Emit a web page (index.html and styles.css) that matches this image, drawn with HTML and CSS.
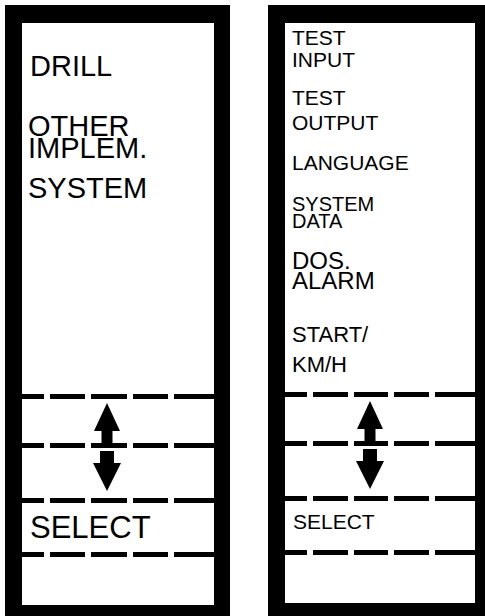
FILE: index.html
```html
<!DOCTYPE html>
<html>
<head>
  <title>Terminal Menus</title>
  <link rel="stylesheet" href="styles.css">
</head>
<body>

  <!-- Main menu -->
  <div class="screen screen-main">
    <div class="menu">
      <div class="menu-item">DRILL</div>
      <div class="menu-item">OTHER<br>IMPLEM.</div>
      <div class="menu-item">SYSTEM</div>
    </div>
    <div class="dash"><span></span><span></span><span></span><span></span><span></span></div>
    <div class="key key-up">
      <svg width="28" height="40" viewBox="0 0 28 40"><polygon points="14,0 27,28 19.5,28 19.5,40 8.5,40 8.5,28 1,28" fill="#000"/></svg>
    </div>
    <div class="dash"><span></span><span></span><span></span><span></span><span></span></div>
    <div class="key key-down">
      <svg width="28" height="40" viewBox="0 0 28 40"><polygon points="7,0 21,0 21,12 28,12 14,40 0,12 7,12" fill="#000"/></svg>
    </div>
    <div class="dash"><span></span><span></span><span></span><span></span><span></span></div>
    <div class="key key-select">SELECT</div>
    <div class="dash"><span></span><span></span><span></span><span></span><span></span></div>
    <div class="key key-blank"></div>
  </div>

  <!-- System menu -->
  <div class="screen screen-system">
    <div class="menu">
      <div class="menu-item">TEST<br>INPUT</div>
      <div class="menu-item">TEST<br>OUTPUT</div>
      <div class="menu-item">LANGUAGE</div>
      <div class="menu-item">SYSTEM<br>DATA</div>
      <div class="menu-item">DOS.<br>ALARM</div>
      <div class="menu-item">START/<br>KM/H</div>
    </div>
    <div class="dash"><span></span><span></span><span></span><span></span><span></span></div>
    <div class="key key-up">
      <svg width="28" height="40" viewBox="0 0 28 40"><polygon points="14,0 27,28 19.5,28 19.5,40 8.5,40 8.5,28 1,28" fill="#000"/></svg>
    </div>
    <div class="dash"><span></span><span></span><span></span><span></span><span></span></div>
    <div class="key key-down">
      <svg width="28" height="40" viewBox="0 0 28 40"><polygon points="7,0 21,0 21,12 28,12 14,40 0,12 7,12" fill="#000"/></svg>
    </div>
    <div class="dash"><span></span><span></span><span></span><span></span><span></span></div>
    <div class="key key-select">SELECT</div>
    <div class="dash"><span></span><span></span><span></span><span></span><span></span></div>
    <div class="key key-blank"></div>
  </div>

</body>
</html>
```

FILE: styles.css
```css
html, body {
  height: 616px;
  overflow: hidden;
}

body {
  margin: 0;
  padding: 5px 0 0 5px;
  box-sizing: border-box;
  display: flex;
  gap: 38px;
  background-color: #fff;
  color: #000;
  font-family: "Liberation Sans", Arial, sans-serif;
}

.screen {
  display: flex;
  flex-direction: column;
  box-sizing: border-box;
  height: 611px;
  border: solid #000;
  background-color: #fff;
}

.screen-main {
  width: 225px;
  border-width: 18px 16px 11px 17px;
}

.screen-system {
  width: 217px;
  border-width: 18px 10px 13px 17px;
}

.menu {
  flex: 1;
}

/* main menu items */
.screen-main .menu {
  padding-left: 6px;
}

.screen-main .menu-item {
  font-size: 29px;
  line-height: 22px;
}

.screen-main .menu-item:nth-child(1) { margin: 32px 0 0 2px; }
.screen-main .menu-item:nth-child(2) { margin-top: 38px; }
.screen-main .menu-item:nth-child(3) { margin-top: 18px; }

/* system menu items */
.screen-system .menu {
  padding: 4px 0 0 7px;
}

.screen-system .menu-item {
  font-size: 21px;
  line-height: 22px;
}

.screen-system .menu-item:nth-child(2) { margin-top: 14px; line-height: 25px; }
.screen-system .menu-item:nth-child(3) { margin-top: 17px; }
.screen-system .menu-item:nth-child(4) { margin-top: 22px; font-size: 20px; line-height: 17px; }
.screen-system .menu-item:nth-child(5) { margin-top: 21px; font-size: 24px; line-height: 20px; }
.screen-system .menu-item:nth-child(6) { margin-top: 29px; font-size: 22px; line-height: 30px; }

/* dashed separators */
.dash {
  display: flex;
  flex: none;
  gap: 6px;
  height: 5px;
}

.dash span {
  flex: 1;
  background-color: #000;
}

.dash span:first-child {
  flex: 0 0 22px;
}

.dash span:last-child {
  flex: 0 0 40px;
}

/* soft keys */
.key {
  display: flex;
  flex: none;
  box-sizing: border-box;
  padding-left: 71px;
}

.key-up {
  height: 44px;
  align-items: flex-end;
}

.key-down {
  height: 50px;
  align-items: flex-start;
  padding-top: 3px;
}

.key-select {
  height: 49px;
  padding-left: 8px;
}

.screen-main .key-select {
  font-size: 31px;
  line-height: 49px;
}

.screen-system .key-select {
  font-size: 21px;
  line-height: 41px;
}

.key-blank {
  height: 48px;
}
```
